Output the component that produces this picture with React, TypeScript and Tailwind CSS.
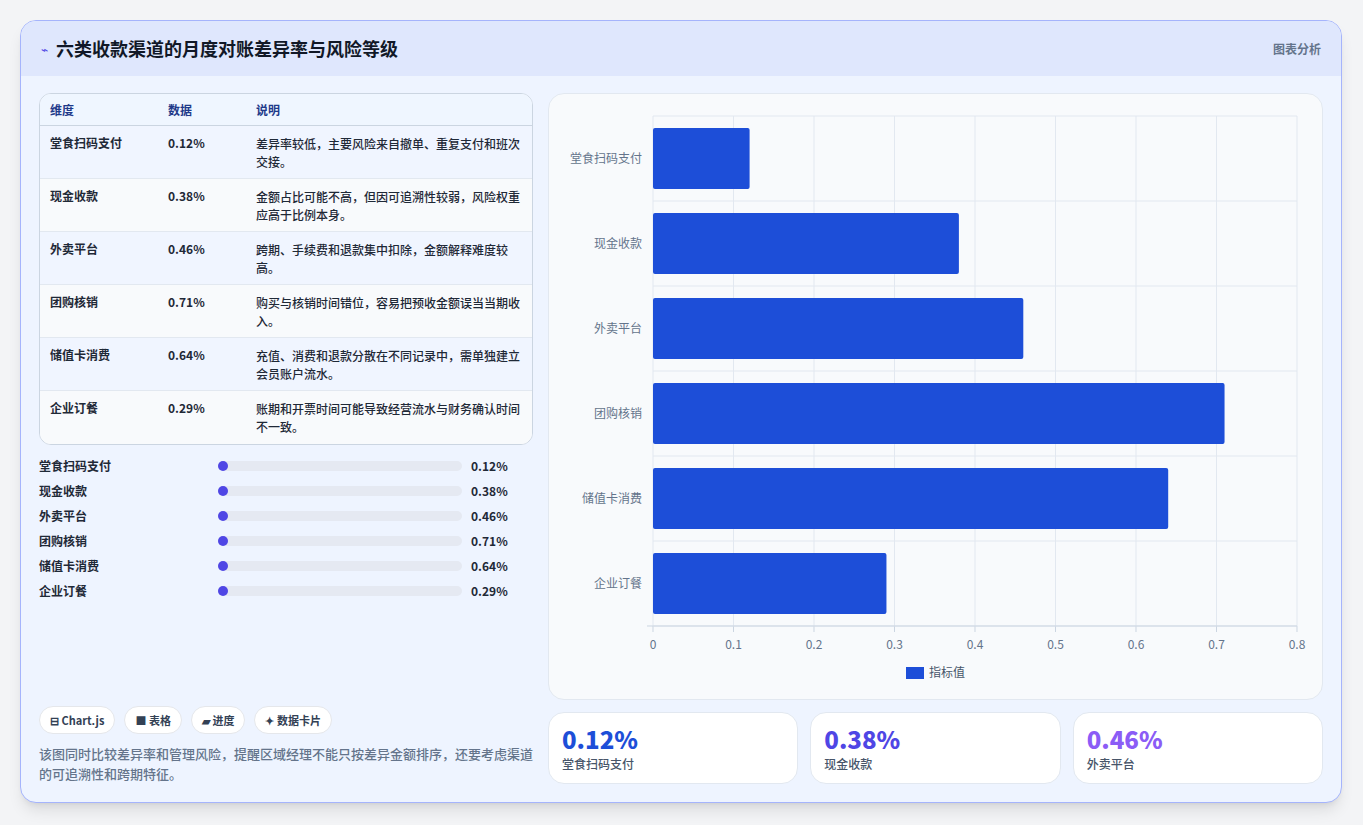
const rows = [
  ["堂食扫码支付", "0.12%", "差异率较低，主要风险来自撤单、重复支付和班次交接。"],
  ["现金收款", "0.38%", "金额占比可能不高，但因可追溯性较弱，风险权重应高于比例本身。"],
  ["外卖平台", "0.46%", "跨期、手续费和退款集中扣除，金额解释难度较高。"],
  ["团购核销", "0.71%", "购买与核销时间错位，容易把预收金额误当当期收入。"],
  ["储值卡消费", "0.64%", "充值、消费和退款分散在不同记录中，需单独建立会员账户流水。"],
  ["企业订餐", "0.29%", "账期和开票时间可能导致经营流水与财务确认时间不一致。"],
];
const vals = [0.12, 0.38, 0.46, 0.71, 0.64, 0.29];
const font = { fontFamily: '"Noto Sans CJK SC", "Noto Sans", sans-serif' };

function Chart() {
  const x0 = 104, w = 644, y0 = 22, band = 85;
  return (
    <svg width="773" height="607" className="block">
      {Array.from({ length: 9 }).map((_, i) => (
        <g key={i}>
          <line x1={x0 + (w * i) / 8} x2={x0 + (w * i) / 8} y1={y0} y2={532} stroke="#e2e8f0" />
          <line x1={x0 + (w * i) / 8} x2={x0 + (w * i) / 8} y1={532} y2={538} stroke="#cbd5e1" />
          <text x={x0 + (w * i) / 8} y={555} textAnchor="middle" fontSize="12" fill="#64748b">{i === 0 ? "0" : (i / 10).toString()}</text>
        </g>
      ))}
      {Array.from({ length: 7 }).map((_, i) => (
        <line key={i} x1={x0} x2={x0 + w} y1={y0 + band * i} y2={y0 + band * i} stroke="#e2e8f0" />
      ))}
      <line x1={x0 - 6} x2={x0 + w} y1={532} y2={532} stroke="#cbd5e1" />
      {vals.map((v, i) => (
        <g key={i}>
          <rect x={x0} y={y0 + band * i + 12} width={(v / 0.8) * w} height={61} rx="2" fill="#1d4ed8" />
          <text x={93} y={y0 + band * i + 47} textAnchor="end" fontSize="12" fill="#64748b">{rows[i][0]}</text>
        </g>
      ))}
      <rect x={357} y={573} width={18} height={12} fill="#1d4ed8" />
      <text x={380} y={583} fontSize="12" fill="#475569">指标值</text>
    </svg>
  );
}

export default function App() {
  return (
    <div className="w-[1363px] h-[825px] bg-[#f3f4f6] p-5" style={font}>
      <div className="w-[1322px] h-[783px] rounded-2xl border border-[#a5b4fc] bg-[#eef4ff] overflow-hidden flex flex-col shadow-lg">
        <div className="h-[55px] bg-[#dfe7fd] flex items-center justify-between px-5">
          <div className="flex items-center gap-2">
            <span className="text-[#4f46e5] text-xs">⌁</span>
            <span className="text-[18px] font-bold text-[#111827]">六类收款渠道的月度对账差异率与风险等级</span>
          </div>
          <span className="text-xs font-semibold text-[#64748b]">图表分析</span>
        </div>
        <div className="flex-1 flex gap-[15px] pl-[18px] pr-[18px] pt-[17px] pb-[18px]">
          <div className="w-[496px] flex flex-col">
            <div className="rounded-xl border border-[#cbd5e1] bg-white overflow-hidden text-xs">
              <div className="flex h-[32px] items-center bg-[#eff6ff] border-b border-[#cbd5e1] font-semibold text-[#1e3a8a]">
                <div className="w-[128px] pl-[10px]">维度</div>
                <div className="w-[88px]">数据</div>
                <div className="flex-1">说明</div>
              </div>
              {rows.map((r, i) => (
                <div key={i} className={`flex h-[53px] pt-[9px] text-[#1f2937] ${i < 5 ? "border-b border-[#e2e8f0]" : ""} ${i % 2 ? "bg-[#f8fafc]" : "bg-[#f0f5ff]"}`}>
                  <div className="w-[128px] pl-[10px] font-semibold">{r[0]}</div>
                  <div className="w-[88px] font-semibold">{r[1]}</div>
                  <div className="flex-1 pr-3 leading-[18px] font-medium">{r[2]}</div>
                </div>
              ))}
            </div>
            <div className="mt-[12px] flex flex-col gap-[7px]">
              {rows.map((r, i) => (
                <div key={i} className="flex items-center h-[18px] text-xs font-semibold text-[#1f2937]">
                  <div className="w-[179px]">{r[0]}</div>
                  <div className="w-[244px] h-[10px] rounded-full bg-[#e5e9f2] relative">
                    <div className="h-[10px] rounded-full bg-[#4f46e5]" style={{ width: `${v(i)}px` }} />
                  </div>
                  <div className="ml-[9px]">{r[1]}</div>
                </div>
              ))}
            </div>
            <div className="mt-auto flex gap-[9px] text-[11px] font-semibold text-[#334155]">
              {["⊟ Chart.js", "■ 表格", "▰ 进度", "✦ 数据卡片"].map((t) => (
                <span key={t} className="h-[28px] px-[10px] flex items-center rounded-full bg-white border border-[#e5e7eb]">{t}</span>
              ))}
            </div>
            <p className="mt-[10px] text-[13px] leading-[20px] text-[#64748b] font-medium">该图同时比较差异率和管理风险，提醒区域经理不能只按差异金额排序，还要考虑渠道的可追溯性和跨期特征。</p>
          </div>
          <div className="flex-1 flex flex-col gap-[12px]">
            <div className="h-[607px] rounded-2xl bg-[#f8fafc] border border-[#e2e8f0] overflow-hidden">
              <Chart />
            </div>
            <div className="flex gap-[12px] flex-1">
              {[["0.12%", "text-[#1d4ed8]", 0], ["0.38%", "text-[#4f46e5]", 1], ["0.46%", "text-[#8b5cf6]", 2]].map(([val, c, i]) => (
                <div key={val as string} className="flex-1 rounded-2xl bg-white border border-[#e2e8f0] px-[13px] pt-[10px]">
                  <div className={`text-[24px] font-extrabold leading-[32px] ${c}`}>{val}</div>
                  <div className="text-xs text-[#475569] font-medium mt-[1px]">{rows[i as number][0]}</div>
                </div>
              ))}
            </div>
          </div>
        </div>
      </div>
    </div>
  );
}
function v(_i: number) {
  return 10;
}
